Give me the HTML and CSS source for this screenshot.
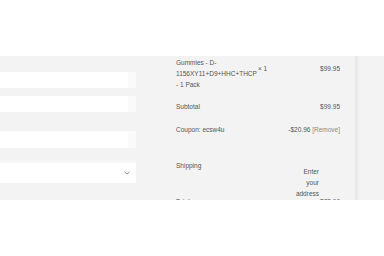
FILE: index.html
```html
<!DOCTYPE html>
<html>
<head>
<meta charset="utf-8">
<link rel="stylesheet" href="styles.css">
</head>
<body>
<header class="top"></header>
<main class="band">
  <section class="form">
    <div class="field f1"></div>
    <div class="field f2"></div>
    <div class="field f3"></div>
    <div class="field select f4">
      <svg class="chev" width="6" height="4" viewBox="0 0 6 4"><path d="M0.5 0.8 L3 3.2 L5.5 0.8" fill="none" stroke="#888" stroke-width="1"/></svg>
    </div>
    <div class="field f5"></div>
  </section>
  <section class="summary">
    <div class="row product">
      <div class="name">Gummies - D-<br>1156XY11+D9+HHC+THCP<br>- 1 Pack</div>
      <div class="qty">× 1</div>
      <div class="price">$99.95</div>
    </div>
    <div class="row subtotal">
      <div class="label">Subtotal</div>
      <div class="price">$99.95</div>
    </div>
    <div class="row coupon">
      <div class="label">Coupon: ecsw4u</div>
      <div class="price">-$20.96 <span class="remove">[Remove]</span></div>
    </div>
    <div class="row shipping">
      <div class="label">Shipping</div>
      <div class="ship-val">Enter your address</div>
    </div>
    <div class="row total">
      <div class="label">Total</div>
      <div class="price">$78.99</div>
    </div>
  </section>
  <div class="divider"></div>
</main>
<footer class="bottom"></footer>
</body>
</html>
```
FILE: styles.css
```css
html, body {
  margin: 0;
  padding: 0;
  background: #ffffff;
}
body {
  width: 384px;
  height: 256px;
  overflow: hidden;
  font-family: "Liberation Sans", Arial, sans-serif;
  font-size: 6.5px;
  line-height: 11px;
  color: #555555;
}
.top {
  height: 56px;
  background: #ffffff;
}
.band {
  height: 144px;
  background: #f3f3f3;
  overflow: hidden;
  display: flex;
  align-items: flex-start;
}
.form {
  width: 136px;
  display: flex;
  flex-direction: column;
  padding-top: 16px;
}
.field {
  background: #ffffff;
  height: 16px;
  position: relative;
  box-shadow: inset -8px 0 0 #fafafa;
}
.f2 { margin-top: 8px; }
.f3 { margin-top: 19px; height: 17px; }
.f4 { margin-top: 13px; height: 22px; box-shadow: inset 0 2px 0 #f7f7f7; }
.f5 { margin-top: 17px; height: 20px; }
.chev {
  position: absolute;
  right: 6px;
  top: 10px;
}
.summary {
  margin-left: 40px;
  width: 164px;
  padding-top: 1px;
  display: flex;
  flex-direction: column;
}
.row {
  display: flex;
  justify-content: space-between;
  align-items: flex-start;
}
.product {
  display: grid;
  grid-template-columns: 82px 1fr auto;
}
.product .qty,
.product .price {
  margin-top: 6px;
}
.subtotal { margin-top: 11px; }
.coupon { margin-top: 12px; }
.shipping {
  margin-top: 25px;
  height: 36px;
  justify-content: space-between;
}
.ship-val {
  width: 24px;
  margin-top: 6px;
  margin-right: 21px;
  text-align: right;
}
.remove { color: #8a8a8a; }
.divider {
  margin-left: 15px;
  width: 3px;
  height: 144px;
  background: #e9e9e9;
}
.bottom {
  height: 56px;
  background: #ffffff;
}
```
